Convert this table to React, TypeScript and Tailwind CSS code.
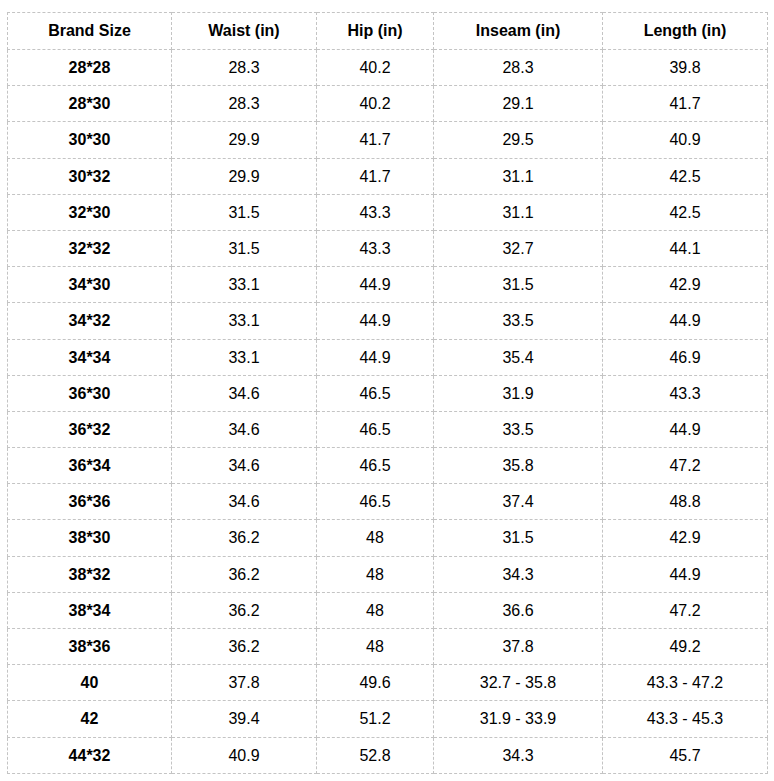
const rows: string[][] = [
  ['28*28', '28.3', '40.2', '28.3', '39.8'],
  ['28*30', '28.3', '40.2', '29.1', '41.7'],
  ['30*30', '29.9', '41.7', '29.5', '40.9'],
  ['30*32', '29.9', '41.7', '31.1', '42.5'],
  ['32*30', '31.5', '43.3', '31.1', '42.5'],
  ['32*32', '31.5', '43.3', '32.7', '44.1'],
  ['34*30', '33.1', '44.9', '31.5', '42.9'],
  ['34*32', '33.1', '44.9', '33.5', '44.9'],
  ['34*34', '33.1', '44.9', '35.4', '46.9'],
  ['36*30', '34.6', '46.5', '31.9', '43.3'],
  ['36*32', '34.6', '46.5', '33.5', '44.9'],
  ['36*34', '34.6', '46.5', '35.8', '47.2'],
  ['36*36', '34.6', '46.5', '37.4', '48.8'],
  ['38*30', '36.2', '48', '31.5', '42.9'],
  ['38*32', '36.2', '48', '34.3', '44.9'],
  ['38*34', '36.2', '48', '36.6', '47.2'],
  ['38*36', '36.2', '48', '37.8', '49.2'],
  ['40', '37.8', '49.6', '32.7 - 35.8', '43.3 - 47.2'],
  ['42', '39.4', '51.2', '31.9 - 33.9', '43.3 - 45.3'],
  ['44*32', '40.9', '52.8', '34.3', '45.7'],
];

const headers = ['Brand Size', 'Waist (in)', 'Hip (in)', 'Inseam (in)', 'Length (in)'];

export default function App() {
  return (
    <div className="min-h-[781px] bg-white pt-[12px] pl-[7px] font-['Liberation_Sans',Arial,sans-serif] text-[16px] text-black">
      <table className="w-[760px] table-fixed border-collapse">
        <colgroup>
          <col className="w-[164px]" />
          <col className="w-[145px]" />
          <col className="w-[117px]" />
          <col className="w-[169px]" />
          <col className="w-[165px]" />
        </colgroup>
        <thead>
          <tr>
            {headers.map(h => (
              <th key={h} className="border border-dashed border-[#c4c4c4] py-2 text-center font-bold leading-[1.25]">
                {h}
              </th>
            ))}
          </tr>
        </thead>
        <tbody>
          {rows.map(r => (
            <tr key={r[0]}>
              {r.map((c, i) => (
                <td
                  key={i}
                  className={`border border-dashed border-[#c4c4c4] py-2 text-center leading-[1.2] ${i === 0 ? 'font-bold' : ''}`}
                >
                  {c}
                </td>
              ))}
            </tr>
          ))}
        </tbody>
      </table>
    </div>
  );
}
